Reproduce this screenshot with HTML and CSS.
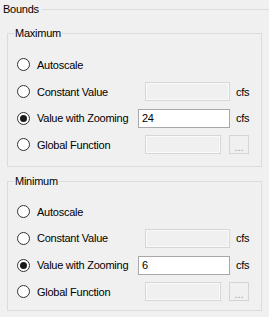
FILE: index.html
```html
<!DOCTYPE html>
<html lang="en">
<head>
    <meta charset="UTF-8">
    <title>Bounds</title>
    <link rel="stylesheet" href="styles.css">
</head>
<body>
    <div class="panel">
        <!-- Outer group header -->
        <div class="panel-header">
            <span class="panel-title">Bounds</span>
            <span class="panel-line"></span>
        </div>

        <!-- Maximum -->
        <div class="group">
            <div class="group-title">Maximum</div>
            <div class="row">
                <span class="radio"></span>
                <span class="label">Autoscale</span>
            </div>
            <div class="row">
                <span class="radio"></span>
                <span class="label">Constant Value</span>
                <span class="field field-const disabled"></span>
                <span class="unit">cfs</span>
            </div>
            <div class="row">
                <span class="radio checked"></span>
                <span class="label">Value with Zooming</span>
                <span class="field field-zoom">24</span>
                <span class="unit">cfs</span>
            </div>
            <div class="row">
                <span class="radio"></span>
                <span class="label">Global Function</span>
                <span class="field field-func disabled"></span>
                <span class="more-btn">...</span>
            </div>
        </div>

        <!-- Minimum -->
        <div class="group group-min">
            <div class="group-title">Minimum</div>
            <div class="row">
                <span class="radio"></span>
                <span class="label">Autoscale</span>
            </div>
            <div class="row">
                <span class="radio"></span>
                <span class="label">Constant Value</span>
                <span class="field field-const disabled"></span>
                <span class="unit">cfs</span>
            </div>
            <div class="row">
                <span class="radio checked"></span>
                <span class="label">Value with Zooming</span>
                <span class="field field-zoom">6</span>
                <span class="unit">cfs</span>
            </div>
            <div class="row">
                <span class="radio"></span>
                <span class="label">Global Function</span>
                <span class="field field-func disabled"></span>
                <span class="more-btn">...</span>
            </div>
        </div>
    </div>
</body>
</html>
```

FILE: styles.css
```css
body {
    margin: 0;
    padding: 0;
    background-color: #f0f0f0;
    font-family: 'Liberation Sans', Arial, sans-serif;
    font-size: 11px;
    letter-spacing: -0.25px;
    color: #000;
    width: 269px;
    height: 317px;
    overflow: hidden;
}

.panel {
    padding-top: 1px;
}

.panel-header {
    display: flex;
    align-items: center;
    height: 16px;
    padding-left: 3px;
}

.panel-title {
    line-height: 13px;
}

.panel-line {
    flex: 1;
    height: 1px;
    margin-left: 3px;
    background-color: #dcdcdc;
}

.group {
    margin: 16px 7px 0 7px;
    border: 1px solid #dcdcdc;
    padding: 0 0 7.7px 0;
}

.group-min {
    margin-top: 14px;
    padding-bottom: 5px;
}

.group-title {
    width: fit-content;
    margin: -7px 0 11.5px 6px;
    padding: 0 1px;
    line-height: 13px;
    background-color: #f0f0f0;
}

.group-min .group-title {
    margin-bottom: 10.5px;
}

.row {
    display: flex;
    align-items: center;
    height: 26.7px;
    padding: 0 11px 0 9px;
}

.radio {
    width: 11px;
    height: 11px;
    border: 1px solid #333;
    border-radius: 50%;
    background-color: #fff;
    display: flex;
    align-items: center;
    justify-content: center;
    flex-shrink: 0;
}

.radio.checked::after {
    content: '';
    width: 7px;
    height: 7px;
    border-radius: 50%;
    background-color: #1a1a1a;
}

.label {
    flex: 1;
    margin-left: 7px;
    white-space: nowrap;
}

.field {
    box-sizing: border-box;
    height: 19px;
    border: 1px solid #a8a8a8;
    background-color: #fff;
    line-height: 17px;
    padding-left: 3px;
}

.field.disabled {
    border-color: #d7d7d7;
    background-color: #f0f0f0;
    box-shadow: inset 0 0 0 1px #f9f9f9;
}

.field-const {
    width: 85px;
}

.field-zoom {
    width: 92px;
}

.field-func {
    width: 76px;
}

.unit {
    margin-left: 6px;
    width: 14px;
    white-space: nowrap;
}

.more-btn {
    box-sizing: border-box;
    width: 20px;
    height: 19px;
    margin: 0 1px 0 8px;
    border: 1px solid #d4d4d4;
    color: #9a9a9a;
    text-align: center;
    line-height: 22px;
    letter-spacing: 0;
}
```
